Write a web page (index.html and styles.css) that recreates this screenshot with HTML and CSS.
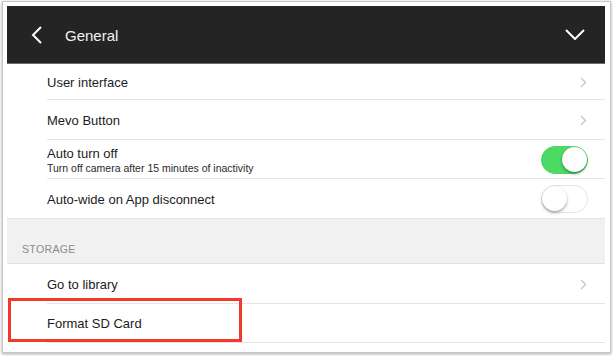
FILE: index.html
```html
<!DOCTYPE html>
<html lang="en">
<head>
    <meta charset="UTF-8">
    <meta name="viewport" content="width=device-width, initial-scale=1.0">
    <title>General settings</title>
    <link rel="stylesheet" href="styles.css">
</head>
<body>
    <div class="window">
        <header class="topbar">
            <svg class="back-icon" width="12" height="18" viewBox="0 0 12 18">
                <polyline points="10,1 2,9 10,17" fill="none" stroke="#fff" stroke-width="2"/>
            </svg>
            <h1 class="title">General</h1>
            <svg class="collapse-icon" width="20" height="11" viewBox="0 0 20 11">
                <polyline points="1,1 10,10 19,1" fill="none" stroke="#fff" stroke-width="2"/>
            </svg>
        </header>

        <div class="list">
            <div class="row row-first">
                <span class="row-label">User interface</span>
                <svg class="chevron" width="7" height="11" viewBox="0 0 7 11">
                    <polyline points="1,1 5.5,5.5 1,10" fill="none" stroke="#c7c7cc" stroke-width="1.4"/>
                </svg>
            </div>
            <div class="row">
                <span class="row-label">Mevo Button</span>
                <svg class="chevron" width="7" height="11" viewBox="0 0 7 11">
                    <polyline points="1,1 5.5,5.5 1,10" fill="none" stroke="#c7c7cc" stroke-width="1.4"/>
                </svg>
            </div>
            <div class="row row-short">
                <div class="row-text">
                    <span class="row-label">Auto turn off</span>
                    <span class="row-detail">Turn off camera after 15 minutes of inactivity</span>
                </div>
                <span class="toggle on"><span class="knob"></span></span>
            </div>
            <div class="row row-last">
                <span class="row-label">Auto-wide on App disconnect</span>
                <span class="toggle"><span class="knob"></span></span>
            </div>

            <div class="section-header">Storage</div>

            <div class="row">
                <span class="row-label">Go to library</span>
                <svg class="chevron" width="7" height="11" viewBox="0 0 7 11">
                    <polyline points="1,1 5.5,5.5 1,10" fill="none" stroke="#c7c7cc" stroke-width="1.4"/>
                </svg>
            </div>
            <div class="row row-short highlighted">
                <span class="row-label">Format SD Card</span>
                <span class="highlight-box"></span>
            </div>
        </div>
    </div>
</body>
</html>
```

FILE: styles.css
```css
:root {
    --bar-color: #242424;
    --text-color: #1c1c1c;
    --muted-color: #8a8a8f;
    --divider-color: #e4e4e4;
    --section-bg: #f1f1f1;
    --switch-on: #4cd964;
    --chevron-color: #c7c7cc;
    --highlight-color: #f2392b;
}

* {
    margin: 0;
    padding: 0;
    box-sizing: border-box;
}

body {
    font-family: 'Liberation Sans', Arial, sans-serif;
    color: var(--text-color);
    background: #fff;
    width: 613px;
    height: 356px;
    overflow: hidden;
}

.window {
    margin: 1px 2px 0 2px;
    padding: 4px 5px 9px 4px;
    border: 1px solid #c6c6c6;
    box-shadow: 0 1px 3px rgba(0, 0, 0, 0.35);
    background: #fff;
}

/* top bar */
.topbar {
    height: 58px;
    background: var(--bar-color);
    border-bottom: 1px solid #6b6b6b;
    display: flex;
    align-items: center;
    padding: 1px 20px 0 24px;
}

.back-icon {
    flex-shrink: 0;
}

.title {
    font-size: 15px;
    font-weight: 400;
    color: #f2f2f2;
    margin-left: 22px;
    flex: 1;
}

.collapse-icon {
    flex-shrink: 0;
    margin-top: -2px;
}

/* rows */
.row {
    position: relative;
    height: 40px;
    display: flex;
    align-items: center;
    justify-content: space-between;
    padding: 0 18px 0 40px;
    font-size: 13px;
}

.row::after {
    content: '';
    position: absolute;
    left: 40px;
    right: 0;
    bottom: 0;
    height: 1px;
    background: var(--divider-color);
}

.row-first {
    height: 36px;
}

.row-short {
    height: 39px;
}

.row-last::after {
    left: 0;
}

.row-text {
    display: flex;
    flex-direction: column;
    gap: 1px;
}

.row-detail {
    font-size: 10.5px;
    color: #2a2a2a;
}

/* switches */
.toggle {
    position: relative;
    width: 47px;
    height: 28px;
    border-radius: 14px;
    border: 1.5px solid #e6e6e6;
    background: #fff;
    margin-right: -1px;
}

.toggle .knob {
    position: absolute;
    top: 0;
    left: 0;
    width: 25px;
    height: 25px;
    border-radius: 50%;
    background: #fff;
    box-shadow: 0 2px 3px rgba(0, 0, 0, 0.3), 0 0 1px rgba(0, 0, 0, 0.2);
}

.toggle.on {
    background: var(--switch-on);
    border-color: var(--switch-on);
}

.toggle.on .knob {
    left: auto;
    right: 0;
}

/* section */
.section-header {
    height: 45px;
    background: var(--section-bg);
    border-bottom: 1px solid #e2e2e2;
    padding: 24px 0 0 15px;
    font-size: 10.6px;
    color: var(--muted-color);
    text-transform: uppercase;
    letter-spacing: 0.3px;
}

/* annotation */
.highlight-box {
    position: absolute;
    left: 1px;
    top: -6px;
    width: 234px;
    height: 44px;
    border: 3px solid var(--highlight-color);
}
```
